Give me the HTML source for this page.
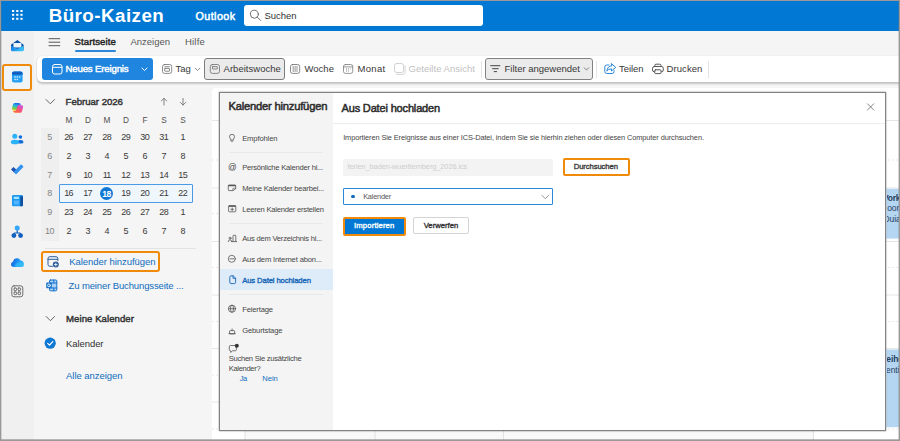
<!DOCTYPE html>
<html lang="de"><head><meta charset="utf-8"><title>Kalender hinzufügen</title>
<style>
html,body{margin:0;padding:0}
body{width:900px;height:441px;overflow:hidden;position:relative;background:#fff;font-family:"Liberation Sans",sans-serif;}
.a{position:absolute;box-sizing:border-box}
.t{position:absolute;white-space:pre;line-height:14px;height:14px;font-family:"Liberation Sans",sans-serif}
svg{position:absolute;overflow:visible}
</style></head><body>
<!-- calendar background area -->
<!-- header -->
<div class="a" style="left:0;top:0;width:900px;height:31px;background:#0078d4"></div>
<!-- tabs row + left panel bg -->
<div class="a" style="left:34px;top:31px;width:866px;height:57px;background:#f5f5f5"></div>
<div class="a" style="left:34px;top:83px;width:184px;height:358px;background:#f5f5f5"></div>
<div class="a" style="left:212px;top:87.700px;width:688px;height:354px;background:#fff;border-radius:4px 0 0 0"></div>
<div class="a" style="left:245px;top:121px;width:568.500px;height:320px;background:#f9f9f9"></div>
<svg class="a" style="left:0;top:0" width="900" height="441" viewBox="0 0 900 441" fill="none">
<g stroke="#e6e6e6" stroke-width="1">
<path d="M212 120.500H900M212 188H900M212 241.500H900M212 295H900M212 348.500H900M212 402H900"/>
<path d="M245 120V441M375 120V441M503.500 120V441M813.500 120V441" stroke="#e2e2e2"/>
<path d="M212 160H900M212 213.500H900M212 267.500H900M212 321.500H900M212 375H900M212 429H900" stroke-dasharray="2 2" stroke="#e9e9e9"/>
</g>
<rect x="886.500" y="188.800" width="14" height="49.800" fill="#b4d6f3"/>
<rect x="886.500" y="349.500" width="14" height="77.700" fill="#b4d6f3"/>
</svg>
<div class="a" style="left:886.500px;top:185px;width:14px;height:250px;overflow:hidden;font-size:8.500px;color:#26405e;line-height:14px;white-space:pre;font-family:'Liberation Sans',sans-serif">
<span style="position:absolute;left:-3.600px;top:5.500px;font-weight:700;letter-spacing:-.2px">Vorksh</span>
<span style="position:absolute;left:-5.400px;top:16px;letter-spacing:-.1px">Room 2</span>
<span style="position:absolute;left:-3px;top:26.500px;letter-spacing:-.1px">Duian</span>
<span style="position:absolute;left:-6.200px;top:166.500px;font-weight:700;letter-spacing:-.1px">Reiho</span>
<span style="position:absolute;left:-7.300px;top:177.500px;letter-spacing:-.1px">Identit</span>
</div>

<!-- left rail -->
<div class="a" style="left:0;top:31px;width:34px;height:410px;background:#f0f0f0"></div>
<!-- search box -->
<div class="a" style="left:243.500px;top:4.700px;width:239.500px;height:21px;background:#fff;border-radius:3px"></div>
<!-- ribbon -->
<div class="a" style="left:36.500px;top:56px;width:880px;height:26.400px;background:#fff;border-radius:5px;box-shadow:0 1.500px 2px rgba(0,0,0,.2),0 0 1px rgba(0,0,0,.12)"></div>
<div class="a" style="left:42px;top:58px;width:111px;height:21.800px;background:#1f85de;border-radius:3px"></div>
<div class="a" style="left:204px;top:58px;width:80.5px;height:22px;background:#ebebeb;border:1px solid #7c7c7c;border-radius:3px"></div>
<div class="a" style="left:485px;top:58px;width:108px;height:22px;background:#ebebeb;border:1px solid #828282;border-radius:3px"></div>
<div class="a" style="left:481px;top:61px;width:1px;height:17px;background:#e4e4e4"></div>
<div class="a" style="left:596.300px;top:61px;width:1px;height:17px;background:#e4e4e4"></div>
<div class="a" style="left:708.400px;top:61px;width:1px;height:17px;background:#e4e4e4"></div>
<!-- tab underline -->
<div class="a" style="left:75px;top:49.5px;width:40.5px;height:2px;background:#2b88d8;border-radius:1px"></div>
<!-- rail selected -->
<div class="a" style="left:2.400px;top:63.800px;width:29.400px;height:26.800px;background:#f1f4f7;border:2.200px solid #f08a0a;border-radius:3px"></div>
<!-- mini calendar -->
<div class="a" style="left:40.5px;top:128px;width:18px;height:113px;background:#efefef"></div>
<div class="a" style="left:59px;top:184px;width:133.5px;height:18.5px;background:#eff6fc;border:1px solid #4a9ae6;border-radius:1px"></div>
<div class="a" style="left:100px;top:187.100px;width:13.400px;height:13.400px;background:#0f78d4;border-radius:50%"></div>
<div class="a" style="left:45px;top:248px;width:151px;height:1px;background:#e3e3e3"></div>
<div class="a" style="left:40.700px;top:251.200px;width:119.500px;height:20.500px;border:2px solid #f08a0a;border-radius:3px"></div>
<!-- modal -->
<div class="a" style="left:219px;top:92px;width:667px;height:339px;background:#fff;border:1px solid #828282;box-shadow:0 0 1.500px rgba(0,0,0,.5)"></div>
<div class="a" style="left:220px;top:93px;width:113px;height:337px;background:#f4f4f4"></div>
<div class="a" style="left:333px;top:123px;width:552px;height:1px;background:#ededed"></div>
<div class="a" style="left:220px;top:269.300px;width:113px;height:20.400px;background:#deecf9"></div>
<div class="a" style="left:229px;top:152px;width:94px;height:1px;background:#e8e8e8"></div>
<div class="a" style="left:229px;top:223px;width:94px;height:1px;background:#e8e8e8"></div>
<div class="a" style="left:229px;top:294px;width:94px;height:1px;background:#e8e8e8"></div>
<!-- file input -->
<div class="a" style="left:343px;top:158.5px;width:209.700px;height:17.400px;background:#f3f3f3;border-radius:1px"></div>
<div class="a" style="left:563px;top:157.500px;width:67.200px;height:18.400px;border:2px solid #f08a0a;border-radius:2px;background:#fff"></div>
<div class="a" style="left:343px;top:188px;width:209.700px;height:17px;background:#fff;border:1px solid #2b88d8;border-radius:1px"></div>
<div class="a" style="left:351.300px;top:194.700px;width:3.800px;height:3.800px;background:#0f6cbd;border-radius:50%"></div>
<div class="a" style="left:343px;top:217px;width:62.800px;height:18.600px;border:2px solid #f08a0a;border-radius:2px;background:#0078d4"></div>
<div class="a" style="left:412.800px;top:217.300px;width:56px;height:16.900px;border:1px solid #d4d4d4;border-radius:2px;background:#fff"></div>
<svg class="a" style="left:0;top:0" width="900" height="441" viewBox="0 0 900 441" fill="none" stroke-linecap="round" stroke-linejoin="round">
<!-- waffle -->
<g fill="#fff" stroke="none">
<rect x="12" y="10" width="2.2" height="2"/><rect x="16.2" y="10" width="2.2" height="2"/><rect x="20.4" y="10" width="2.2" height="2"/>
<rect x="12" y="13.8" width="2.2" height="2"/><rect x="16.2" y="13.8" width="2.2" height="2"/><rect x="20.4" y="13.8" width="2.2" height="2"/>
<rect x="12" y="17.8" width="2.2" height="2"/><rect x="16.2" y="17.8" width="2.2" height="2"/><rect x="20.4" y="17.8" width="2.2" height="2"/>
</g>
<!-- search -->
<g stroke="#606060" stroke-width="0.900"><circle cx="254.400" cy="14.200" r="4"/><path d="M257.300 17.100l3.300 3.300"/></g>
<!-- hamburger -->
<g stroke="#555" stroke-width="1"><path d="M49 38.700h10.800M49 42.200h10.800M49 45.700h10.800"/></g>
<!-- neues ereignis icon -->
<g stroke="#fff" stroke-width="1"><rect x="52.5" y="64.5" width="9.5" height="9.5" rx="2"/><path d="M52.5 67.3h9.5"/><path d="M142 68l2.500 2.600 2.500-2.600" stroke-width="1"/></g>
<!-- Tag -->
<g stroke="#6e6e6e" stroke-width="0.800"><rect x="162.500" y="64.500" width="9.200" height="8.900" rx="2"/><path d="M164.800 66.700h4.600"/><rect x="164.700" y="68.400" width="4.800" height="2.800" rx="0.400"/></g>
<path d="M195.3 68.2l2.3 2.4 2.3-2.4" stroke="#888" stroke-width="0.9"/>
<!-- Arbeitswoche -->
<g stroke="#6e6e6e" stroke-width="0.800"><rect x="210.300" y="64.500" width="9.200" height="8.900" rx="2"/><rect x="212.500" y="66.600" width="4.800" height="2.400" rx="0.300"/></g>
<!-- Woche -->
<g stroke="#6c6c6c" stroke-width="0.800"><rect x="290.500" y="64.500" width="9.200" height="8.900" rx="2"/><path d="M293.200 66.300v5.300M295.100 66.300v5.300M297 66.300v5.300" stroke-width="0.700"/></g>
<!-- Monat -->
<g stroke="#7a7a7a" stroke-width="0.800"><rect x="343.500" y="64.500" width="9.200" height="8.900" rx="2"/><path d="M343.500 66.900h9.200"/><path d="M346 69h1M348 69h1M350.2 69h.6M346 71h1M348 71h1" stroke-width="0.9" stroke-linecap="butt"/></g>
<!-- Geteilte Ansicht -->
<g stroke="#d2d2d2" stroke-width="1"><rect x="394.5" y="63.5" width="9" height="9" rx="2"/><path d="M396.5 74.3h6.3q2.3 0 2.3-2.3v-6"/></g>
<!-- Filter -->
<g stroke="#444" stroke-width="1"><path d="M490.7 65.7h9.2M492.6 68.7h5.6M494.2 71.6h2.4"/></g>
<path d="M584.2 67.7l2.3 2.4 2.3-2.4" stroke="#777" stroke-width="0.9"/>
<!-- Teilen -->
<g stroke="#2b88d8" stroke-width="1"><path d="M609 65h-2.2q-2 0-2 2v4.5q0 2 2 2h5.2q2 0 2-2v-.8"/><path d="M611.5 63.8l4.3 3.6-4.3 3.6v-2.1q-3.2-.2-4.6 2.3 .3-5 4.6-5.4z"/></g>
<!-- Drucken -->
<g stroke="#555" stroke-width="1"><path d="M654.8 66.5v-1q0-1.3 1.3-1.3h3.6q1.3 0 1.3 1.3v1"/><rect x="652.5" y="66.5" width="10.8" height="5.3" rx="1.8"/><rect x="654.8" y="69.8" width="6.2" height="3.8" rx="0.8" fill="#fff"/></g>
<!-- mini cal header -->
<g stroke="#555" stroke-width="0.9"><path d="M46.100 99.600l4.200 4.200 4.200-4.200"/><path d="M46.2 316.5l4.2 4.2 4.2-4.2"/></g>
<g stroke="#666" stroke-width="0.8"><path d="M164 98.4v6.6M161.3 101l2.7-2.7 2.7 2.7"/><path d="M183 98.4v6.6M180.3 102.4l2.7 2.7 2.7-2.7"/></g>
<!-- Kalender hinzufuegen icon -->
<g stroke="#2c5d9b" stroke-width="1"><path d="M52.5 266.3h-2.7q-1.8 0-1.8-1.8v-6q0-1.8 1.8-1.8h6.2q1.8 0 1.8 1.8v2"/><path d="M48 259.3h9.8"/></g>
<circle cx="55.8" cy="264.6" r="3" fill="#2c5d9b"/><path d="M55.8 263.2v2.8M54.4 264.6h2.8" stroke="#fff" stroke-width="0.8"/>
<!-- Buchungsseite icon -->
<g stroke="#1a73c9" stroke-width="1"><rect x="49.500" y="280" width="7.300" height="10.800" rx="1" fill="#a9d0f7"/><path d="M49.5 283h7.3M49.5 288h7.3M53.8 280v3M53.8 288v2.8"/></g>
<rect x="46.2" y="282.6" width="5.6" height="5.6" rx="0.8" fill="#1a73c9"/><circle cx="49" cy="285.4" r="1.4" stroke="#fff" stroke-width="0.8"/>
<!-- check circle -->
<circle cx="50.2" cy="343.2" r="5.6" fill="#0f78d4"/><path d="M47.7 343.4l1.8 1.8 3.3-3.6" stroke="#fff" stroke-width="1.2"/>
<!-- modal left icons -->
<g stroke="#555" stroke-width="0.8">
<path d="M230.700 139q-1.200-.900-1.200-2.300 0-2.400 2.500-2.400t2.500 2.400q0 1.400-1.200 2.300v1.200h-2.600z"/><path d="M231.200 141.400h1.600" stroke-width="0.600"/>
<path d="M235.700 188.300v-2.500q0-.800-.800-.800h-5.800q-.800 0-.800.800v4q0 .800.800.800h3.600z"/><path d="M228.300 185.600h7.400" stroke-width="1.300" stroke-linecap="butt"/><path d="M232.900 190.600v-2.300h2.800" stroke-width="0.600"/>
<rect x="228.600" y="205.600" width="7.200" height="6.200" rx="0.800"/><path d="M228.600 206.200h7.200" stroke-width="1.300" stroke-linecap="butt"/><path d="M232.200 208v2.600M230.900 209.300h2.600"/>
<circle cx="230" cy="238.200" r="1"/><path d="M228.300 241.600q0-1.800 1.700-1.800t1.700 1.800"/><path d="M233 241.600v-5.600q0-.8.800-.8h1.200q.8 0 .8.800v5.600M231.600 241.600h5"/>
<circle cx="231.800" cy="258.800" r="3.500"/><path d="M230 258.800h3.600"/>
<circle cx="232" cy="308.700" r="3.600"/><ellipse cx="232" cy="308.700" rx="1.500" ry="3.600"/><path d="M228.500 308.700h7"/>
<path d="M229.600 333.500v-2.300q0-.600.600-.600h3.800q.600 0 .600.600v2.300zM228.900 333.600h6.400M232.100 330.500v-1.600"/>
<path d="M229.300 346.500q0-1 1-1h5q1 0 1 1v3.300q0 1-1 1h-2.800l-1.800 1.600v-1.600h-.4q-1 0-1-1z"/>
</g>
<circle cx="236.800" cy="345.800" r="2" fill="#333"/>
<g stroke="#1667b7" stroke-width="0.900"><path d="M229.800 277q0-1.200 1.200-1.200h2.200l2.400 2.400v4.200q0 1.200-1.200 1.200h-3.400q-1.200 0-1.200-1.200z"/><path d="M233 275.900v2.400h2.500"/></g>
<!-- close X -->
<path d="M867.500 103.800l6.200 6.200M873.700 103.800l-6.200 6.200" stroke="#666" stroke-width="0.800"/>
<!-- dropdown chevron -->
<path d="M542 195.400l3.300 3.300 3.300-3.300" stroke="#777" stroke-width="0.800"/>
</svg>
<svg class="a" style="left:0;top:0" width="40" height="441" viewBox="0 0 40 441" fill="none" stroke-linecap="round" stroke-linejoin="round">
<defs>
<linearGradient id="gcp1" x1="0.300" y1="0" x2="0" y2="1"><stop offset="0" stop-color="#1f6fe8"/><stop offset=".3" stop-color="#22b8e0"/><stop offset=".65" stop-color="#6ed04a"/><stop offset="1" stop-color="#ffd21e"/></linearGradient><linearGradient id="gcp2" x1="1" y1="0" x2=".2" y2="1"><stop offset="0" stop-color="#b25cf5"/><stop offset=".45" stop-color="#f0509a"/><stop offset="1" stop-color="#ff6a1e"/></linearGradient>
<linearGradient id="gcl" x1="0" y1="0" x2="1" y2=".3"><stop offset="0" stop-color="#1447c0"/><stop offset=".45" stop-color="#1a86f0"/><stop offset="1" stop-color="#35bdfb"/></linearGradient><linearGradient id="gml" x1="0" y1="0" x2="1" y2=".4"><stop offset="0" stop-color="#1a7ae0"/><stop offset=".5" stop-color="#2499ee"/><stop offset="1" stop-color="#38c4fa"/></linearGradient>
</defs>
<!-- mail -->
<path d="M11 44.800L17.300 40l6.300 4.800v5.400H11z" fill="#0d4fa0"/>
<rect x="13.400" y="43" width="8" height="4.600" rx=".6" fill="#eaf6ff"/>
<path d="M11 45.700l6.300 3 6.300-3v4.400q0 1.200-1.200 1.200H12.200q-1.200 0-1.200-1.200z" fill="url(#gml)"/>
<!-- calendar -->
<rect x="12" y="71.600" width="10.600" height="11" rx="2" fill="#259ff6"/>
<path d="M12 73.600q0-2 2-2h6.600q2 0 2 2v1.200H12z" fill="#0f5fc0"/>
<g fill="#cfe9ff"><rect x="14.300" y="76.300" width="1.500" height="1.400"/><rect x="16.600" y="76.300" width="1.500" height="1.400"/><rect x="18.900" y="76.300" width="1.500" height="1.400"/><rect x="14.300" y="78.800" width="1.500" height="1.400"/><rect x="16.600" y="78.800" width="1.500" height="1.400"/></g>
<!-- copilot -->
<path d="M13.600 103h5q1.900 0 2.400 1.700l-.600.100q-1.700.300-2.300 2l-1.100 3.700h-3.600q-1.900 0-1.500-1.900l1.100-4.100q.400-1.500 1.600-1.500z" fill="url(#gcp1)"/>
<path d="M20.800 105.300h.800q1.900 0 1.500 1.900l-1.100 4.100q-.400 1.500-1.700 1.500h-5q-1.700 0-2.300-1.700h1.300q1.600 0 2.100-1.700l1-3.300q.500-1.500 2.100-1.500z" fill="url(#gcp2)"/>
<!-- people -->
<circle cx="20.400" cy="137" r="1.800" fill="#0f6cd8"/><path d="M17.600 142.300q0-2.300 2.900-2.300t2.900 2.300q0 1.300-1.600 1.300h-2.600q-1.600 0-1.600-1.300z" fill="#0f6cd8"/>
<circle cx="14.800" cy="136.300" r="2.500" fill="#2ab2f8"/><path d="M10.900 142.200q0-2.400 4-2.400t4 2.400q0 2-4 2t-4-2z" fill="#2ab2f8"/>
<!-- todo -->
<g transform="translate(0 0.800)"><path d="M11 168.600l2.500-2.500 3.700 3.700-2.500 2.500z" fill="#1d4fb0"/>
<path d="M14.700 172.300l-1.300-1.200 7.700-7.600 2.500 2.500-7.600 7.600z" fill="#3192f0"/></g>
<!-- book -->
<path d="M12 196.300q0-1.300 1.300-1.300h8.400q1.300 0 1.300 1.300v8.600q0 1.300-1.300 1.300h-8.400q-1.300 0-1.300-1.300z" fill="#1e9af3"/>
<path d="M20.300 196.300h2.700v8.600q0 1.300-1.300 1.300h-1.400z" fill="#0d4f9e"/>
<rect x="13.800" y="196.800" width="5.200" height="2.200" rx=".4" fill="#a6e3ff"/>
<rect x="13.800" y="200.400" width="5.200" height="4" rx=".4" fill="#52b4ff"/>
<!-- org -->
<path d="M17.200 230v3M14 235.500v-1.700q0-.8.800-.8h4.800q.8 0 .8.800v1.700" stroke="#0f5fc0" stroke-width="1.200"/>
<circle cx="17.200" cy="228" r="2.500" fill="#33a6f5"/><circle cx="13.900" cy="235.600" r="2.400" fill="#0f5fc0"/><circle cx="20.600" cy="235.600" r="2.400" fill="#0f5fc0"/>
<!-- cloud -->
<path d="M13.800 266.900q-2.800 0-2.800-2.600 0-2 2-2.600.800-3.400 4.100-3.400 2.500 0 3.500 2.300 3.300.200 3.300 3.300 0 3-2.900 3z" fill="url(#gcl)"/>
<path d="M16 266.900q-1.500-1-.5-2.700 1.200-1.700 3.800-2 1.300-.2 2.200.6 2.300.4 2.300 2.400 0 1.700-1.900 1.700z" fill="#36bafa" opacity=".7"/>
<!-- apps -->
<g stroke="#5f5f5f" stroke-width=".9"><rect x="11.800" y="285.800" width="11" height="11" rx="2.200"/>
<rect x="14" y="288" width="2.600" height="2.600" rx=".8"/><rect x="18" y="288" width="2.600" height="2.600" rx=".8"/><rect x="14" y="292" width="2.600" height="2.600" rx=".8"/><rect x="18" y="292" width="2.600" height="2.600" rx=".8"/></g>
</svg>

<span class="t" style="left:48.66px;top:8.9px;font-size:18.75px;font-weight:700;color:#fff;letter-spacing:0.470px;">Büro-Kaizen</span>
<span class="t" style="left:195.52px;top:8.5px;font-size:10.75px;font-weight:400;-webkit-text-stroke:0.48px currentColor;color:#fff;letter-spacing:0.415px;">Outlook</span>
<span class="t" style="left:264.57px;top:8.5px;font-size:9.5px;font-weight:400;color:#333;letter-spacing:-0.063px;">Suchen</span>
<span class="t" style="left:74.57px;top:35.0px;font-size:9.6px;font-weight:400;-webkit-text-stroke:0.43px currentColor;color:#1f1f1f;letter-spacing:0.083px;">Startseite</span>
<span class="t" style="left:130.57px;top:35.0px;font-size:9.5px;font-weight:400;color:#555;letter-spacing:-0.034px;">Anzeigen</span>
<span class="t" style="left:185.07px;top:35.0px;font-size:9.5px;font-weight:400;color:#555;letter-spacing:0.168px;">Hilfe</span>
<span class="t" style="left:65.57px;top:62.3px;font-size:9.6px;font-weight:400;-webkit-text-stroke:0.43px currentColor;color:#fff;letter-spacing:-0.157px;">Neues Ereignis</span>
<span class="t" style="left:175.57px;top:62.3px;font-size:9.5px;font-weight:400;color:#383838;letter-spacing:0.009px;">Tag</span>
<span class="t" style="left:223.57px;top:62.3px;font-size:9.5px;font-weight:400;color:#383838;letter-spacing:0.027px;">Arbeitswoche</span>
<span class="t" style="left:304.57px;top:62.3px;font-size:9.5px;font-weight:400;color:#383838;letter-spacing:-0.010px;">Woche</span>
<span class="t" style="left:357.57px;top:62.3px;font-size:9.5px;font-weight:400;color:#383838;letter-spacing:0.290px;">Monat</span>
<span class="t" style="left:408.57px;top:62.3px;font-size:9.5px;font-weight:400;color:#c2c2c2;letter-spacing:0.021px;">Geteilte Ansicht</span>
<span class="t" style="left:504.57px;top:62.3px;font-size:9.5px;font-weight:400;color:#383838;letter-spacing:-0.010px;">Filter angewendet</span>
<span class="t" style="left:619.07px;top:62.3px;font-size:9.5px;font-weight:400;color:#383838;letter-spacing:-0.079px;">Teilen</span>
<span class="t" style="left:666.57px;top:62.3px;font-size:9.5px;font-weight:400;color:#383838;letter-spacing:0.069px;">Drucken</span>
<span class="t" style="left:65.57px;top:95.0px;font-size:9.6px;font-weight:400;-webkit-text-stroke:0.43px currentColor;color:#333;letter-spacing:-0.020px;">Februar 2026</span>
<span class="t" style="left:53.90px;width:30px;text-align:center;top:114.0px;font-size:8.25px;font-weight:400;color:#505050;letter-spacing:0px;text-indent:0px">M</span>
<span class="t" style="left:72.90px;width:30px;text-align:center;top:114.0px;font-size:8.25px;font-weight:400;color:#505050;letter-spacing:0px;text-indent:0px">D</span>
<span class="t" style="left:92.00px;width:30px;text-align:center;top:114.0px;font-size:8.25px;font-weight:400;color:#505050;letter-spacing:0px;text-indent:0px">M</span>
<span class="t" style="left:111.00px;width:30px;text-align:center;top:114.0px;font-size:8.25px;font-weight:400;color:#505050;letter-spacing:0px;text-indent:0px">D</span>
<span class="t" style="left:130.00px;width:30px;text-align:center;top:114.0px;font-size:8.25px;font-weight:400;color:#505050;letter-spacing:0px;text-indent:0px">F</span>
<span class="t" style="left:149.00px;width:30px;text-align:center;top:114.0px;font-size:8.25px;font-weight:400;color:#505050;letter-spacing:0px;text-indent:0px">S</span>
<span class="t" style="left:168.00px;width:30px;text-align:center;top:114.0px;font-size:8.25px;font-weight:400;color:#505050;letter-spacing:0px;text-indent:0px">S</span>
<span class="t" style="left:34.70px;width:30px;text-align:center;top:130.1px;font-size:9px;font-weight:400;color:#858585;letter-spacing:-0.6px;text-indent:-0.6px">5</span>
<span class="t" style="left:53.90px;width:30px;text-align:center;top:130.1px;font-size:9px;font-weight:400;color:#3a3a3a;letter-spacing:-0.65px;text-indent:-0.65px">26</span>
<span class="t" style="left:72.90px;width:30px;text-align:center;top:130.1px;font-size:9px;font-weight:400;color:#3a3a3a;letter-spacing:-0.65px;text-indent:-0.65px">27</span>
<span class="t" style="left:92.00px;width:30px;text-align:center;top:130.1px;font-size:9px;font-weight:400;color:#3a3a3a;letter-spacing:-0.65px;text-indent:-0.65px">28</span>
<span class="t" style="left:111.00px;width:30px;text-align:center;top:130.1px;font-size:9px;font-weight:400;color:#3a3a3a;letter-spacing:-0.65px;text-indent:-0.65px">29</span>
<span class="t" style="left:130.00px;width:30px;text-align:center;top:130.1px;font-size:9px;font-weight:400;color:#3a3a3a;letter-spacing:-0.65px;text-indent:-0.65px">30</span>
<span class="t" style="left:149.00px;width:30px;text-align:center;top:130.1px;font-size:9px;font-weight:400;color:#3a3a3a;letter-spacing:-0.65px;text-indent:-0.65px">31</span>
<span class="t" style="left:168.00px;width:30px;text-align:center;top:130.1px;font-size:9px;font-weight:400;color:#3a3a3a;letter-spacing:-0.65px;text-indent:-0.65px">1</span>
<span class="t" style="left:34.70px;width:30px;text-align:center;top:148.8px;font-size:9px;font-weight:400;color:#858585;letter-spacing:-0.6px;text-indent:-0.6px">6</span>
<span class="t" style="left:53.90px;width:30px;text-align:center;top:148.8px;font-size:9px;font-weight:400;color:#3a3a3a;letter-spacing:-0.65px;text-indent:-0.65px">2</span>
<span class="t" style="left:72.90px;width:30px;text-align:center;top:148.8px;font-size:9px;font-weight:400;color:#3a3a3a;letter-spacing:-0.65px;text-indent:-0.65px">3</span>
<span class="t" style="left:92.00px;width:30px;text-align:center;top:148.8px;font-size:9px;font-weight:400;color:#3a3a3a;letter-spacing:-0.65px;text-indent:-0.65px">4</span>
<span class="t" style="left:111.00px;width:30px;text-align:center;top:148.8px;font-size:9px;font-weight:400;color:#3a3a3a;letter-spacing:-0.65px;text-indent:-0.65px">5</span>
<span class="t" style="left:130.00px;width:30px;text-align:center;top:148.8px;font-size:9px;font-weight:400;color:#3a3a3a;letter-spacing:-0.65px;text-indent:-0.65px">6</span>
<span class="t" style="left:149.00px;width:30px;text-align:center;top:148.8px;font-size:9px;font-weight:400;color:#3a3a3a;letter-spacing:-0.65px;text-indent:-0.65px">7</span>
<span class="t" style="left:168.00px;width:30px;text-align:center;top:148.8px;font-size:9px;font-weight:400;color:#3a3a3a;letter-spacing:-0.65px;text-indent:-0.65px">8</span>
<span class="t" style="left:34.70px;width:30px;text-align:center;top:167.6px;font-size:9px;font-weight:400;color:#858585;letter-spacing:-0.6px;text-indent:-0.6px">7</span>
<span class="t" style="left:53.90px;width:30px;text-align:center;top:167.6px;font-size:9px;font-weight:400;color:#3a3a3a;letter-spacing:-0.65px;text-indent:-0.65px">9</span>
<span class="t" style="left:72.90px;width:30px;text-align:center;top:167.6px;font-size:9px;font-weight:400;color:#3a3a3a;letter-spacing:-0.65px;text-indent:-0.65px">10</span>
<span class="t" style="left:92.00px;width:30px;text-align:center;top:167.6px;font-size:9px;font-weight:400;color:#3a3a3a;letter-spacing:-0.65px;text-indent:-0.65px">11</span>
<span class="t" style="left:111.00px;width:30px;text-align:center;top:167.6px;font-size:9px;font-weight:400;color:#3a3a3a;letter-spacing:-0.65px;text-indent:-0.65px">12</span>
<span class="t" style="left:130.00px;width:30px;text-align:center;top:167.6px;font-size:9px;font-weight:400;color:#3a3a3a;letter-spacing:-0.65px;text-indent:-0.65px">13</span>
<span class="t" style="left:149.00px;width:30px;text-align:center;top:167.6px;font-size:9px;font-weight:400;color:#3a3a3a;letter-spacing:-0.65px;text-indent:-0.65px">14</span>
<span class="t" style="left:168.00px;width:30px;text-align:center;top:167.6px;font-size:9px;font-weight:400;color:#3a3a3a;letter-spacing:-0.65px;text-indent:-0.65px">15</span>
<span class="t" style="left:34.70px;width:30px;text-align:center;top:186.4px;font-size:9px;font-weight:400;color:#858585;letter-spacing:-0.6px;text-indent:-0.6px">8</span>
<span class="t" style="left:53.90px;width:30px;text-align:center;top:186.4px;font-size:9px;font-weight:400;color:#3a3a3a;letter-spacing:-0.65px;text-indent:-0.65px">16</span>
<span class="t" style="left:72.90px;width:30px;text-align:center;top:186.4px;font-size:9px;font-weight:400;color:#3a3a3a;letter-spacing:-0.65px;text-indent:-0.65px">17</span>
<span class="t" style="left:91.80px;width:30px;text-align:center;top:186.5px;font-size:8.5px;font-weight:700;color:#fff;letter-spacing:-0.5px;text-indent:-0.5px">18</span>
<span class="t" style="left:111.00px;width:30px;text-align:center;top:186.4px;font-size:9px;font-weight:400;color:#3a3a3a;letter-spacing:-0.65px;text-indent:-0.65px">19</span>
<span class="t" style="left:130.00px;width:30px;text-align:center;top:186.4px;font-size:9px;font-weight:400;color:#3a3a3a;letter-spacing:-0.65px;text-indent:-0.65px">20</span>
<span class="t" style="left:149.00px;width:30px;text-align:center;top:186.4px;font-size:9px;font-weight:400;color:#3a3a3a;letter-spacing:-0.65px;text-indent:-0.65px">21</span>
<span class="t" style="left:168.00px;width:30px;text-align:center;top:186.4px;font-size:9px;font-weight:400;color:#3a3a3a;letter-spacing:-0.65px;text-indent:-0.65px">22</span>
<span class="t" style="left:34.70px;width:30px;text-align:center;top:205.2px;font-size:9px;font-weight:400;color:#858585;letter-spacing:-0.6px;text-indent:-0.6px">9</span>
<span class="t" style="left:53.90px;width:30px;text-align:center;top:205.2px;font-size:9px;font-weight:400;color:#3a3a3a;letter-spacing:-0.65px;text-indent:-0.65px">23</span>
<span class="t" style="left:72.90px;width:30px;text-align:center;top:205.2px;font-size:9px;font-weight:400;color:#3a3a3a;letter-spacing:-0.65px;text-indent:-0.65px">24</span>
<span class="t" style="left:92.00px;width:30px;text-align:center;top:205.2px;font-size:9px;font-weight:400;color:#3a3a3a;letter-spacing:-0.65px;text-indent:-0.65px">25</span>
<span class="t" style="left:111.00px;width:30px;text-align:center;top:205.2px;font-size:9px;font-weight:400;color:#3a3a3a;letter-spacing:-0.65px;text-indent:-0.65px">26</span>
<span class="t" style="left:130.00px;width:30px;text-align:center;top:205.2px;font-size:9px;font-weight:400;color:#3a3a3a;letter-spacing:-0.65px;text-indent:-0.65px">27</span>
<span class="t" style="left:149.00px;width:30px;text-align:center;top:205.2px;font-size:9px;font-weight:400;color:#3a3a3a;letter-spacing:-0.65px;text-indent:-0.65px">28</span>
<span class="t" style="left:168.00px;width:30px;text-align:center;top:205.2px;font-size:9px;font-weight:400;color:#3a3a3a;letter-spacing:-0.65px;text-indent:-0.65px">1</span>
<span class="t" style="left:34.70px;width:30px;text-align:center;top:223.9px;font-size:9px;font-weight:400;color:#858585;letter-spacing:-0.6px;text-indent:-0.6px">10</span>
<span class="t" style="left:53.90px;width:30px;text-align:center;top:223.9px;font-size:9px;font-weight:400;color:#3a3a3a;letter-spacing:-0.65px;text-indent:-0.65px">2</span>
<span class="t" style="left:72.90px;width:30px;text-align:center;top:223.9px;font-size:9px;font-weight:400;color:#3a3a3a;letter-spacing:-0.65px;text-indent:-0.65px">3</span>
<span class="t" style="left:92.00px;width:30px;text-align:center;top:223.9px;font-size:9px;font-weight:400;color:#3a3a3a;letter-spacing:-0.65px;text-indent:-0.65px">4</span>
<span class="t" style="left:111.00px;width:30px;text-align:center;top:223.9px;font-size:9px;font-weight:400;color:#3a3a3a;letter-spacing:-0.65px;text-indent:-0.65px">5</span>
<span class="t" style="left:130.00px;width:30px;text-align:center;top:223.9px;font-size:9px;font-weight:400;color:#3a3a3a;letter-spacing:-0.65px;text-indent:-0.65px">6</span>
<span class="t" style="left:149.00px;width:30px;text-align:center;top:223.9px;font-size:9px;font-weight:400;color:#3a3a3a;letter-spacing:-0.65px;text-indent:-0.65px">7</span>
<span class="t" style="left:168.00px;width:30px;text-align:center;top:223.9px;font-size:9px;font-weight:400;color:#3a3a3a;letter-spacing:-0.65px;text-indent:-0.65px">8</span>
<span class="t" style="left:69.17px;top:254.5px;font-size:9.5px;font-weight:400;color:#0f6cbd;letter-spacing:-0.037px;">Kalender hinzufügen</span>
<span class="t" style="left:68.57px;top:279.0px;font-size:9.5px;font-weight:400;color:#0f6cbd;letter-spacing:-0.127px;">Zu meiner Buchungsseite ...</span>
<span class="t" style="left:66.07px;top:311.5px;font-size:9.6px;font-weight:400;-webkit-text-stroke:0.43px currentColor;color:#333;letter-spacing:0.047px;">Meine Kalender</span>
<span class="t" style="left:66.07px;top:336.5px;font-size:9.5px;font-weight:400;color:#333;letter-spacing:-0.085px;">Kalender</span>
<span class="t" style="left:66.07px;top:369.0px;font-size:9.5px;font-weight:400;color:#0f6cbd;letter-spacing:-0.053px;">Alle anzeigen</span>
<span class="t" style="left:228.49px;top:99.1px;font-size:11.25px;font-weight:400;-webkit-text-stroke:0.51px currentColor;color:#2e2e2e;letter-spacing:-0.237px;">Kalender hinzufügen</span>
<span class="t" style="left:217.40px;width:30px;text-align:center;top:160.2px;font-size:8.5px;font-weight:400;color:#444;letter-spacing:0px;text-indent:0px">@</span>
<span class="t" style="left:242.16px;top:131.5px;font-size:7.6px;font-weight:400;color:#454545;letter-spacing:-0.125px;">Empfohlen</span>
<span class="t" style="left:242.16px;top:160.5px;font-size:7.6px;font-weight:400;color:#454545;letter-spacing:-0.225px;">Persönliche Kalender hi...</span>
<span class="t" style="left:242.16px;top:181.5px;font-size:7.6px;font-weight:400;color:#454545;letter-spacing:-0.211px;">Meine Kalender bearbei...</span>
<span class="t" style="left:242.16px;top:202.5px;font-size:7.6px;font-weight:400;color:#454545;letter-spacing:-0.211px;">Leeren Kalender erstellen</span>
<span class="t" style="left:242.16px;top:231.5px;font-size:7.6px;font-weight:400;color:#454545;letter-spacing:-0.223px;">Aus dem Verzeichnis hi...</span>
<span class="t" style="left:242.16px;top:252.5px;font-size:7.6px;font-weight:400;color:#454545;letter-spacing:-0.145px;">Aus dem Internet abon...</span>
<span class="t" style="left:242.15px;top:273.5px;font-size:7.7px;font-weight:400;-webkit-text-stroke:0.35px currentColor;color:#1565b5;letter-spacing:-0.119px;">Aus Datei hochladen</span>
<span class="t" style="left:242.16px;top:302.5px;font-size:7.6px;font-weight:400;color:#454545;letter-spacing:-0.157px;">Feiertage</span>
<span class="t" style="left:242.16px;top:323.5px;font-size:7.6px;font-weight:400;color:#454545;letter-spacing:-0.147px;">Geburtstage</span>
<span class="t" style="left:228.66px;top:352.3px;font-size:7.6px;font-weight:400;color:#454545;letter-spacing:-0.265px;">Suchen Sie zusätzliche</span>
<span class="t" style="left:228.66px;top:362.0px;font-size:7.6px;font-weight:400;color:#454545;letter-spacing:-0.327px;">Kalender?</span>
<span class="t" style="left:239.66px;top:372.0px;font-size:7.6px;font-weight:400;color:#0f6cbd;letter-spacing:-0.424px;">Ja</span>
<span class="t" style="left:262.16px;top:372.0px;font-size:7.6px;font-weight:400;color:#0f6cbd;letter-spacing:0.015px;">Nein</span>
<span class="t" style="left:341.50px;top:100.5px;font-size:11px;font-weight:400;-webkit-text-stroke:0.49px currentColor;color:#2b2b2b;letter-spacing:-0.159px;">Aus Datei hochladen</span>
<span class="t" style="left:343.17px;top:130.5px;font-size:7.4px;font-weight:400;color:#454545;letter-spacing:-0.097px;">Importieren Sie Ereignisse aus einer ICS-Datei, indem Sie sie hierhin ziehen oder diesen Computer durchsuchen.</span>
<span class="t" style="left:347.57px;top:160.3px;font-size:7.4px;font-weight:400;color:#cdcdcd;letter-spacing:-0.082px;">ferien_baden-wuerttemberg_2026.ics</span>
<span class="t" style="left:573.75px;top:159.9px;font-size:7.7px;font-weight:400;-webkit-text-stroke:0.35px currentColor;color:#3a3a3a;letter-spacing:-0.109px;">Durchsuchen</span>
<span class="t" style="left:363.17px;top:189.6px;font-size:7.4px;font-weight:400;color:#555;letter-spacing:-0.216px;">Kalender</span>
<span class="t" style="left:354.05px;top:219.2px;font-size:7.7px;font-weight:400;-webkit-text-stroke:0.35px currentColor;color:#fff;letter-spacing:0.137px;">Importieren</span>
<span class="t" style="left:423.65px;top:219.2px;font-size:7.7px;font-weight:400;-webkit-text-stroke:0.35px currentColor;color:#333;letter-spacing:0.008px;">Verwerfen</span>
<!-- outer frame -->
<div class="a" style="left:0;top:0;width:900px;height:441px;border:1px solid #9b9896;pointer-events:none"></div>
<div class="a" style="left:1px;top:1px;width:1px;height:439px;background:rgba(120,120,120,.25)"></div>
<div class="a" style="left:1px;top:439px;width:898px;height:1px;background:rgba(120,120,120,.5)"></div>
<div class="a" style="left:898px;top:1px;width:1px;height:439px;background:rgba(120,120,120,.3)"></div>
</body></html>
